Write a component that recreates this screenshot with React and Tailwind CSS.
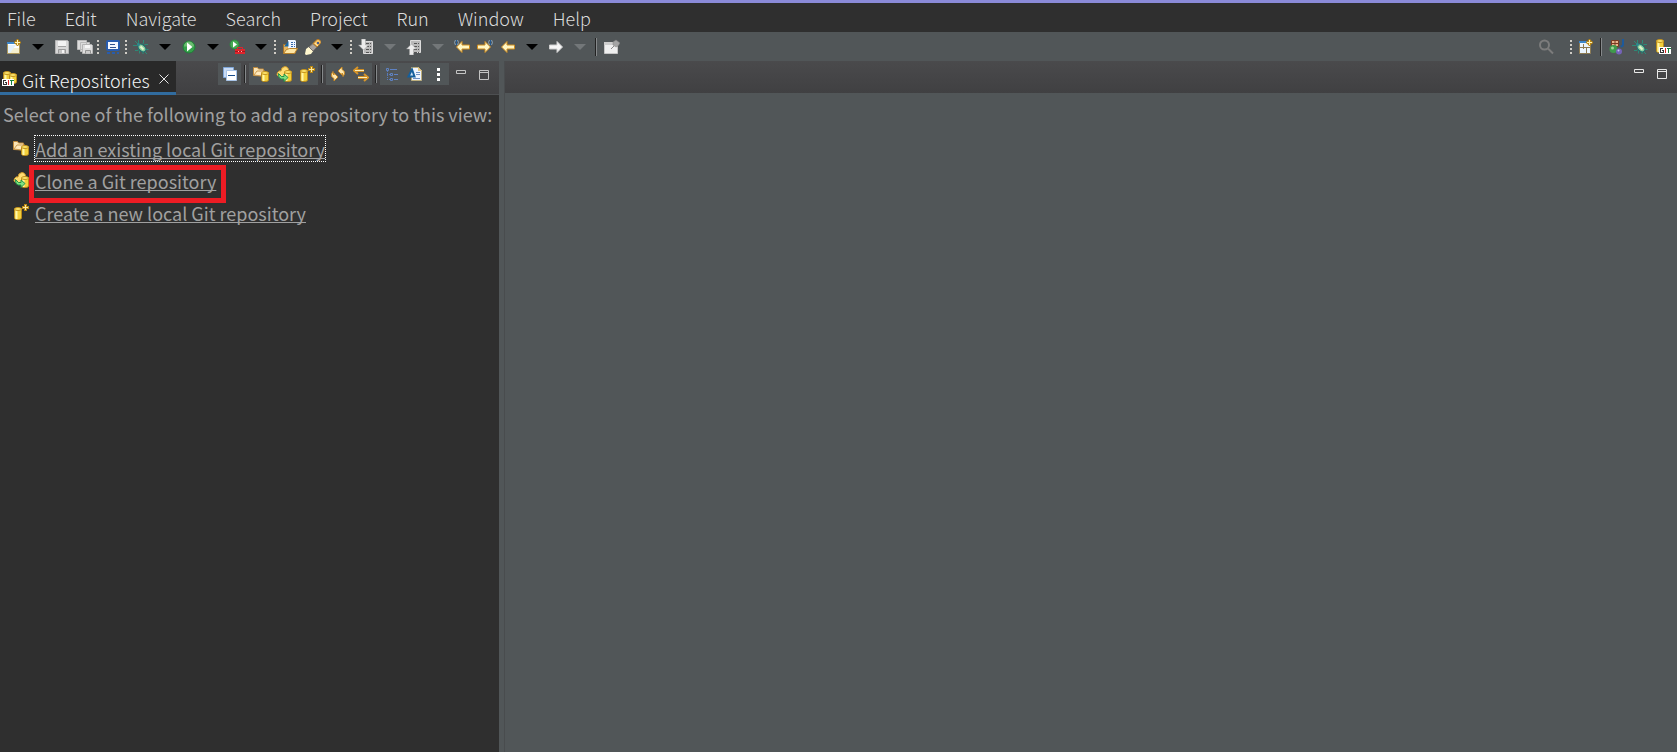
const menus = ['File', 'Edit', 'Navigate', 'Search', 'Project', 'Run', 'Window', 'Help'];

function Svg({ children }) {
  return (
    <svg width="16" height="16" viewBox="0 0 16 16" fill="none" className="shrink-0" aria-hidden="true">
      {children}
    </svg>
  );
}

// shared pieces

function Spark({ x, y }) {
  return (
    <g transform={`translate(${x} ${y})`}>
      <path d="M3.500 0l1.500 2 2 1.500-2 1.500-1.500 2-1.500-2-2-1.500 2-1.500z" fill="#b98714" stroke="#b98714" />
      <path d="M3.500 1v5M1 3.500h5" stroke="#fff3b8" strokeWidth="1" />
    </g>
  );
}

function Cylinder({ x, y, h = 10 }) {
  return (
    <g transform={`translate(${x} ${y})`}>
      <path d={`M.5 2v${h - 3}c0 2 7 2 7 0V2z`} fill="#f3d03c" stroke="#b98a1a" />
      <path d={`M2.500 3v${h - 3}`} stroke="#fff6a8" strokeWidth="2" />
      <ellipse cx="4" cy="2" rx="3.500" ry="1.500" fill="#fbe36a" stroke="#c4921c" />
    </g>
  );
}

function GitTag({ x, y }) {
  return (
    <g transform={`translate(${x} ${y})`} shapeRendering="crispEdges">
      <path d="M0 0h12v7H0z" fill="#fff" />
      <path d="M4 1.500H1.500v4H4V3.500H3" stroke="#333" />
      <path d="M6 1v5" stroke="#d22" strokeWidth="1" />
      <path d="M7.500 1.500h4M9.500 1v5" stroke="#16803c" />
    </g>
  );
}

function Lines() {
  return <path d="M8 4.500h5M8 7.500h5M8 10.500h5M8 13.500h5" stroke="#555" strokeDasharray="3 1" />;
}

// toolbar icons

function NewIcon() {
  return (
    <Svg>
      <path d="M1.500 3.500h12v11h-12z" fill="#fff" stroke="#b09a5c" />
      <path d="M2 9h11v5H2z" fill="#f4efcf" />
      <path d="M2 6h8l-6 8H2z" fill="#e4f2fc" />
      <path d="M1 3h10v2H1z" fill="#3b87cc" />
      <Spark x={8} y={0} />
    </Svg>
  );
}

function SaveIcon() {
  return (
    <Svg>
      <path d="M1.500 1.500h12l1 1v12h-13z" fill="#d8d8d8" stroke="#b5b5b5" />
      <path d="M4 2h8v5H4z" fill="#f3f3f3" />
      <path d="M4 7.500h8" stroke="#a2a2a2" />
      <path d="M4.500 14.500v-4h7v4" fill="#c5c5c5" stroke="#9a9a9a" />
      <path d="M8 11h2v3H8z" fill="#f5f5f5" />
    </Svg>
  );
}

function SaveAllIcon() {
  return (
    <Svg>
      <path d="M.5 1.500h9v9h-9zM3.500 3.500h9v9h-9z" fill="#dcdcdc" stroke="#b9b9b9" />
      <path d="M5.500 5.500h9l1 1v8h-10z" fill="#dedede" stroke="#b4b4b4" />
      <path d="M8 6h5v3H8z" fill="#f6f6f6" />
      <path d="M8.500 14.500v-3h5v3" fill="#ccc" stroke="#929292" />
    </Svg>
  );
}

function ConsoleIcon() {
  return (
    <Svg>
      <rect x="2" y="2" width="12" height="9" rx="1" fill="#f4f8ff" stroke="#285cae" strokeWidth="2" />
      <path d="M5 5.500h5M5 8.500h6" stroke="#33538e" />
      <path d="M2 14h3M7 14h3M12 14h2" stroke="#285cae" strokeWidth="2" />
    </Svg>
  );
}

function BugIcon() {
  return (
    <Svg>
      <path
        d="M5.500 1v3M2 2l3 3M0 6.500h4M2 11.500h3L6 10M6.500 14.500v-3M10.500 1v3L9 6M15 5.500h-3L10 7M15.500 10.500H12M14 15l-3-3M10 15v-2"
        stroke="#2d8a76"
      />
      <ellipse cx="9" cy="9" rx="3" ry="4.500" transform="rotate(-45 9 9)" fill="#8ecf9e" stroke="#1c6f72" />
      <path d="M7.500 7.500l3 3" stroke="#e3f6cf" strokeWidth="2" />
      <circle cx="5.500" cy="5.500" r="1.500" fill="#2f8a90" />
    </Svg>
  );
}

function RunIcon() {
  return (
    <Svg>
      <circle cx="8" cy="8" r="6" fill="#35a04a" stroke="#1f8038" />
      <path d="M3 7.500a5 5 0 0 1 10 0z" fill="#8fd08a" opacity=".6" />
      <path d="M6 3.500v9L11.500 8z" fill="#fff" />
    </Svg>
  );
}

function RunExternalIcon() {
  return (
    <Svg>
      <circle cx="5.500" cy="5.500" r="4.500" fill="#46a952" stroke="#2b8a40" />
      <path d="M4 2.500v6L8 5.500z" fill="#fff" />
      <path d="M6 10h10v5H6z" fill="#e0242c" />
      <path d="M8.500 10V8.500h5V10" stroke="#e0242c" />
      <path d="M6 12.500h10" stroke="#a3141b" />
      <path d="M9 12.500h1M12 12.500h1" stroke="#ffb0a8" />
    </Svg>
  );
}

function OpenTypeIcon() {
  return (
    <Svg>
      <path d="M1.500 14V5.500h4l1 1h7V14z" fill="#e9b864" stroke="#a8742a" />
      <path d="M6 1h7l1 1v8H6z" fill="#edf4ff" />
      <path d="M9 3.500h4M9 5.500h4M9 7.500h4" stroke="#3567a8" strokeDasharray="2 1" />
      <path d="M2 7.500L6.500 2v5.500z" fill="#1766a4" />
      <path d="M1.500 14.500l3-4 3-1h8l-3 5z" fill="#ffe6a3" stroke="#b88129" />
    </Svg>
  );
}

function SearchTorchIcon() {
  return (
    <Svg>
      <path d="M1 10l4-3 4 4-3 4-5 1-1-1z" fill="#fff8cf" />
      <path d="M4 8l4-3.500 4 3.500-4 4z" fill="#a7a29f" stroke="#77706b" />
      <path d="M8 4.500l4-4h2l2 2v1l-4 4.500z" fill="#f3bf62" stroke="#b67824" />
      <path d="M10 4l3 3" stroke="#ffe6a0" />
      <path d="M12 3h2v2h-2z" fill="#485d8f" />
    </Svg>
  );
}

function NextAnnotationIcon() {
  return (
    <Svg>
      <path d="M5.500 2.500h9v12h-9z" fill="#b9b9b9" stroke="#dcdcdc" />
      <Lines />
      <path d="M3.500 0h4v6h3L5.500 11l-5-5h3z" fill="#ececec" stroke="#9b9b9b" strokeWidth=".5" />
    </Svg>
  );
}

function PrevAnnotationIcon() {
  return (
    <Svg>
      <path d="M4.500 1.500h10v12h-10z" fill="#b9b9b9" stroke="#dcdcdc" />
      <Lines />
      <path d="M3.500 16h4v-6h3L5.500 5l-5 5h3z" fill="#ececec" stroke="#9b9b9b" strokeWidth=".5" />
    </Svg>
  );
}

function ArrowShape({ flip, pale }) {
  return (
    <path
      d="M1.500 8L7 2.500V6h7.500v4H7v3.500z"
      transform={flip ? 'matrix(-1 0 0 1 16 0)' : undefined}
      fill={pale ? '#f7f7f7' : '#fff6c4'}
      stroke={pale ? '#cfcfcf' : '#cf8c1d'}
      strokeWidth="1"
      strokeLinejoin="round"
    />
  );
}

function EditLocationIcon({ flip }) {
  return (
    <Svg>
      <g transform={flip ? 'translate(-1 0)' : 'translate(1 0)'}>
        <ArrowShape flip={flip} />
      </g>
      <g transform={flip ? 'matrix(-1 0 0 1 16 0)' : undefined}>
        <path d="M1.500 1Q-.5 3.500 1.500 6M3.500 1q2 2.500 0 5" stroke="#8aa3b6" />
        <path d="M2.500 1v5" stroke="#24588e" />
      </g>
    </Svg>
  );
}

function BackIcon() {
  return <Svg><ArrowShape /></Svg>;
}

function ForwardIcon() {
  return <Svg><ArrowShape flip pale /></Svg>;
}

function PinIcon() {
  return (
    <Svg>
      <path d="M.5 3.500h13v11H.5z" fill="#efefef" stroke="#c6c6c6" />
      <path d="M0 3h9v3H0z" fill="#cdcdcd" />
      <path d="M7 10l3-3" stroke="#8a8a8a" />
      <path d="M9 3l3-2 4 3-2 3-2 1-3-2z" fill="#a4a4a4" stroke="#808080" strokeWidth=".5" />
    </Svg>
  );
}

function MagnifierIcon() {
  return (
    <Svg>
      <circle cx="6.500" cy="6" r="4.500" stroke="#7c7c7c" strokeWidth="2" />
      <path d="M10 9.500l5 5" stroke="#7c7c7c" strokeWidth="2" />
    </Svg>
  );
}

function PerspectiveIcon() {
  return (
    <Svg>
      <path d="M1.500 2.500h11v12h-11z" fill="#eaf5ff" stroke="#8c7b54" />
      <path d="M1 2h8v2H1z" fill="#3b87cc" />
      <path d="M2 8.500h10M5.500 5v5M8.500 9v5" stroke="#8c7b54" />
      <Spark x={8} y={0} />
    </Svg>
  );
}

function JavaIcon() {
  return (
    <Svg>
      <path d="M2.500 1.500h7v6h-7z" fill="#e8b48c" stroke="#7b3a22" />
      <path d="M6 1v7M2 4.500h8" stroke="#7b3a22" />
      <path d="M14 0v5.500q0 2-2.500 2" stroke="#1d5a9c" strokeWidth="2" />
      <circle cx="4.500" cy="10" r="4" fill="#3f9a4c" />
      <circle cx="3.500" cy="9" r="1.500" fill="#9fd597" />
      <circle cx="10" cy="12.500" r="3" fill="#7563b8" />
      <circle cx="9.500" cy="11.500" r="1" fill="#c9bdf0" />
    </Svg>
  );
}

function GitPerspectiveIcon() {
  return (
    <Svg>
      <Cylinder x={1} y={0} h={13} />
      <GitTag x={4} y={8} />
    </Svg>
  );
}

// view icons

function CollapseIcon() {
  return (
    <Svg>
      <path d="M1.500 11.500v-10h10v10z" fill="#c9dcf5" stroke="#7fa6d8" />
      <path d="M4.500 4.500h10v10h-10z" fill="#fff" stroke="#a9c5e8" />
      <path d="M6 9.500h7" stroke="#174c8b" />
    </Svg>
  );
}

function AddRepoIcon() {
  return (
    <Svg>
      <path d="M.5 9.500v-8h4l1 1.500h5v7z" fill="#fbe4b5" stroke="#c08a3c" />
      <path d="M1 9l3-4h8L9 10z" fill="#ffe9bd" stroke="#c99a50" />
      <Cylinder x={8} y={5} h={10} />
    </Svg>
  );
}

function CloneRepoIcon() {
  return (
    <Svg>
      <path d="M2.500 10.500Q0 9 1.500 6.500 3 4 5 5q0-4 4-4.500Q13 1 12.500 5l2 3-3 3z" fill="#ffdc72" stroke="#c9962a" />
      <Cylinder x={8} y={4} h={11} />
      <path d="M2.500 7.500l3 3H8V8l4 3.500L8 15.500V13H5q-3-1-2.500-5.500z" fill="#80e07f" stroke="#239346" />
    </Svg>
  );
}

function CreateRepoIcon() {
  return (
    <Svg>
      <Cylinder x={1} y={3} h={12} />
      <path d="M12.500 0v7M9 3.500h7" stroke="#b98714" strokeWidth="3" />
      <path d="M12.500 1v5M10 3.500h5" stroke="#ffe9a0" />
    </Svg>
  );
}

function RefreshIcon() {
  return (
    <Svg>
      <path d="M8 5L12 1v2.500q3 1 2.500 4.500L13 10.500q0-3-1-3.500v2z" fill="#ffe9b0" stroke="#c98a24" strokeLinejoin="round" />
      <path d="M8 11l-4 4v-2.500Q1 11.500 1.500 8L3 5.500q0 3 1 3.500V7z" fill="#ffe9b0" stroke="#c98a24" strokeLinejoin="round" />
    </Svg>
  );
}

function LinkIcon() {
  return (
    <Svg>
      <path d="M3 4.500h8M5 11.500h8" stroke="#c98a24" strokeWidth="3" />
      <path d="M5 1L1 4.500 5 8M11 8l4 3.500-4 3.500" stroke="#d7952a" strokeWidth="2" />
      <path d="M2 4.500h9M5 11.500h9" stroke="#fff0b8" />
    </Svg>
  );
}

function HierarchyIcon() {
  return (
    <Svg>
      <path d="M3.500 5v9M3 8.500h3M3 13.500h3" stroke="#5879b8" strokeDasharray="1 1" />
      <path d="M2.500 2.500h2v2h-2zM6.500 7.500h2v2h-2zM6.500 12.500h2v2h-2z" stroke="#5f82c2" />
      <path d="M6 3.500h7M10 8.500h4M10 13.500h4" stroke="#5f82c2" />
    </Svg>
  );
}

function WorkingSetIcon() {
  return (
    <Svg>
      <path d="M4.500 1.500h7l3 3v10h-10z" fill="#eef4ff" stroke="#bcae7c" />
      <path d="M11 1v4h4" fill="#e5c883" />
      <path d="M9 6.500h4M9 8.500h4M6 12.500h7" stroke="#6f91c2" />
      <path d="M1.500 10.500h6L5 3.500z" fill="#d3e4f5" stroke="#155f9c" strokeWidth="2" />
    </Svg>
  );
}

function MoreIcon() {
  return (
    <Svg>
      <path d="M7 2h3v3H7zM7 7h3v3H7zM7 12h3v3H7z" fill="#fff" />
    </Svg>
  );
}

function MinimizeIcon() {
  return <Svg><path d="M3.500 4.500h9v3h-9z" stroke="currentColor" /></Svg>;
}

function MaximizeIcon() {
  return <Svg><path d="M3.500 4.500h9v9h-9zM3 6.500h10" stroke="currentColor" /></Svg>;
}

function GitReposIcon() {
  return (
    <Svg>
      <Cylinder x={1} y={0} h={10} />
      <Cylinder x={7} y={2} h={10} />
      <GitTag x={0} y={8} />
    </Svg>
  );
}

function ToolButton({ label, children, wide }) {
  return (
    <button type="button" aria-label={label} className={`flex h-6 shrink-0 items-center justify-center ${wide ? 'w-6' : 'w-[23px]'}`}>
      {children}
    </button>
  );
}

function DropButton({ label, disabled, children }) {
  return (
    <div className="flex shrink-0">
      <ToolButton label={label} wide>{children}</ToolButton>
      <button type="button" aria-label={`${label} options`} disabled={disabled} className={`flex h-6 w-6 items-center justify-center ${disabled ? 'text-[#737779]' : 'text-black'}`}>
        <svg width="12" height="6" viewBox="0 0 12 6" aria-hidden="true">
          <path d="M0 0h12L6 6z" fill="currentColor" />
        </svg>
      </button>
    </div>
  );
}

function Grip() {
  return (
    <svg width="5" height="16" viewBox="0 0 5 16" className="shrink-0" aria-hidden="true">
      <path d="M1 1h2v2H1zM1 5h2v2H1zM1 9h2v2H1zM1 13h2v2H1z" fill="#d0cdc6" />
    </svg>
  );
}

function Divider() {
  return (
    <div className="flex w-2 shrink-0 justify-center">
      <div className="h-[18px] w-[2px] border-l border-[#222] bg-[#85888a]" />
    </div>
  );
}

function ViewGroup({ children }) {
  return <div className="flex h-[22px] items-center bg-[#515658]">{children}</div>;
}

function RepoLink({ icon, children, focused, marked }) {
  return (
    <li className="flex h-8 items-start pl-[13px]">
      <span className="mt-[5px]">{icon}</span>
      <a
        href="#"
        className={`relative ml-[5px] border border-dotted pt-[2px] text-[18px] leading-[23px] underline decoration-1 underline-offset-1 [text-decoration-skip-ink:none] ${focused ? 'border-white' : 'border-transparent'}`}
      >
        {children}
        {marked && <span className="absolute -top-[3px] -right-[10px] -bottom-[10px] -left-[6px] border-[5px] border-[#ed1c24]" />}
      </a>
    </li>
  );
}

function MainToolbar() {
  return (
    <div role="toolbar" className="flex h-[29px] items-center justify-between bg-[#515658]">
      <div className="flex items-center pl-[2px]">
        <DropButton label="New"><NewIcon /></DropButton>
        <ToolButton label="Save"><SaveIcon /></ToolButton>
        <ToolButton label="Save All"><SaveAllIcon /></ToolButton>
        <Grip />
        <ToolButton label="Console"><ConsoleIcon /></ToolButton>
        <Grip />
        <DropButton label="Debug"><BugIcon /></DropButton>
        <DropButton label="Run"><RunIcon /></DropButton>
        <DropButton label="External Tools"><RunExternalIcon /></DropButton>
        <Grip />
        <ToolButton label="Open Type"><OpenTypeIcon /></ToolButton>
        <DropButton label="Search"><SearchTorchIcon /></DropButton>
        <Grip />
        <DropButton label="Next Annotation" disabled><NextAnnotationIcon /></DropButton>
        <DropButton label="Previous Annotation" disabled><PrevAnnotationIcon /></DropButton>
        <ToolButton label="Previous Edit Location"><EditLocationIcon /></ToolButton>
        <ToolButton label="Next Edit Location"><EditLocationIcon flip /></ToolButton>
        <DropButton label="Back"><BackIcon /></DropButton>
        <DropButton label="Forward" disabled><ForwardIcon /></DropButton>
        <Divider />
        <ToolButton label="Pin Editor"><PinIcon /></ToolButton>
      </div>
      <div className="flex items-center pr-[3px]">
        <ToolButton label="Quick Access"><MagnifierIcon /></ToolButton>
        <div className="w-3" />
        <Grip />
        <ToolButton label="Open Perspective"><PerspectiveIcon /></ToolButton>
        <Divider />
        <ToolButton label="Java"><JavaIcon /></ToolButton>
        <ToolButton label="Debug perspective"><BugIcon /></ToolButton>
        <ToolButton label="Git"><GitPerspectiveIcon /></ToolButton>
      </div>
    </div>
  );
}

function RepositoriesView() {
  return (
    <section className="flex w-[499px] shrink-0 flex-col bg-[#2f2f2f]">
      <div className="flex h-[34px] justify-between border-b border-[#4d4f51] bg-linear-to-b from-[#4a4a4c] to-[#404042]">
        <div className="-mb-px flex w-[176px] items-center border-b-3 border-[#316c9f] bg-[#292929] pt-1 pl-[2px] text-[#f4f7f7]">
          <GitReposIcon />
          <span className="ml-1 pt-[2px] text-[18px] leading-6 font-light whitespace-nowrap">Git Repositories</span>
          <button type="button" aria-label="Close" className="ml-auto flex w-6 justify-center">
            <svg width="10" height="10" viewBox="0 0 10 10" aria-hidden="true">
              <path d="M.5.5l9 9M9.500.5l-9 9" stroke="#e6e6e6" />
            </svg>
          </button>
        </div>
        <div className="flex h-6 items-center pt-px pr-1 text-[#c4c4c4]">
          <ViewGroup>
            <ToolButton label="Collapse All"><CollapseIcon /></ToolButton>
          </ViewGroup>
          <Divider />
          <ViewGroup>
            <ToolButton label="Add repository"><AddRepoIcon /></ToolButton>
            <ToolButton label="Clone repository"><CloneRepoIcon /></ToolButton>
            <ToolButton label="Create repository"><CreateRepoIcon /></ToolButton>
          </ViewGroup>
          <Divider />
          <ViewGroup>
            <ToolButton label="Refresh"><RefreshIcon /></ToolButton>
            <ToolButton label="Link with selection"><LinkIcon /></ToolButton>
          </ViewGroup>
          <Divider />
          <ViewGroup>
            <ToolButton label="Hierarchical layout"><HierarchyIcon /></ToolButton>
            <ToolButton label="Filter"><WorkingSetIcon /></ToolButton>
            <ToolButton label="View Menu"><MoreIcon /></ToolButton>
          </ViewGroup>
          <ToolButton label="Minimize"><MinimizeIcon /></ToolButton>
          <ToolButton label="Maximize"><MaximizeIcon /></ToolButton>
        </div>
      </div>
      <div className="pt-[7px] text-[#a0a0a0]">
        <p className="pl-[3px] text-[18px] leading-6 whitespace-nowrap">
          Select one of the following to add a repository to this view:
        </p>
        <ul className="pt-[9px]">
          <RepoLink icon={<AddRepoIcon />} focused>Add an existing local Git repository</RepoLink>
          <RepoLink icon={<CloneRepoIcon />} marked>Clone a Git repository</RepoLink>
          <RepoLink icon={<CreateRepoIcon />}>Create a new local Git repository</RepoLink>
        </ul>
      </div>
    </section>
  );
}

export default function App() {
  return (
    <div className="flex min-h-screen flex-col border-t-3 border-[#8b8bd9] bg-[#515658] font-['Noto_Sans_CJK_KR','Noto_Sans',sans-serif]">
      <nav className="flex h-[29px] items-center gap-[29px] bg-[#2f2f2f] pl-[7px] text-[18px] leading-6 font-light text-[#dcdcdc]">
        {menus.map((name) => (
          <button key={name} type="button">{name}</button>
        ))}
      </nav>
      <MainToolbar />
      <main className="flex flex-1 gap-[5px]">
        <RepositoriesView />
        <section className="min-w-0 flex-1 border-l border-[#494c4e]">
          <div className="flex h-8 items-start justify-end bg-linear-to-b from-[#4a4a4c] to-[#404042] pr-1 text-[#e8e8e8]">
            <ToolButton label="Minimize editor"><MinimizeIcon /></ToolButton>
            <ToolButton label="Maximize editor"><MaximizeIcon /></ToolButton>
          </div>
        </section>
      </main>
    </div>
  );
}
